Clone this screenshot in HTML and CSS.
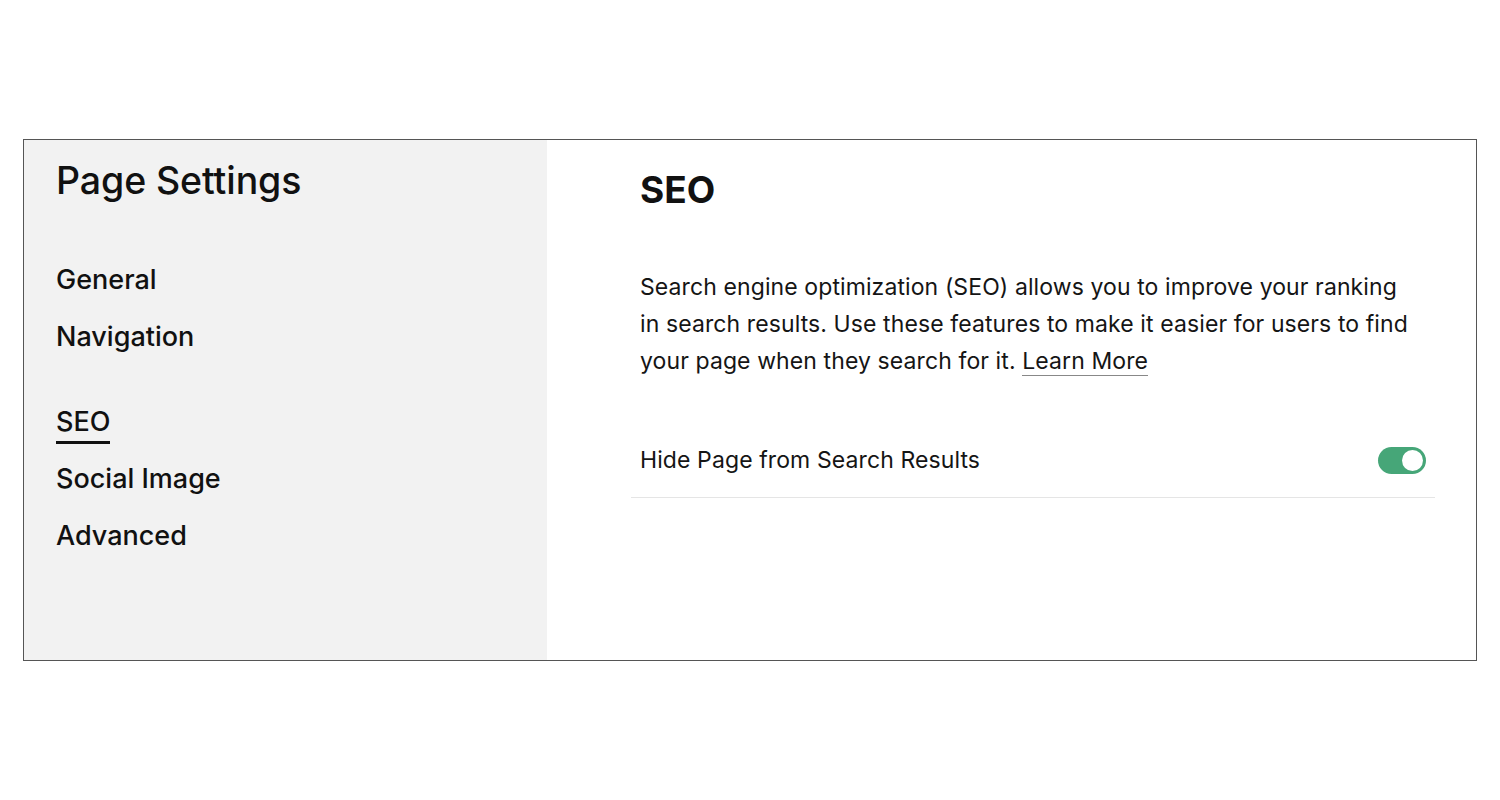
FILE: index.html
```html
<!DOCTYPE html>
<html lang="en">
<head>
<meta charset="utf-8">
<title>Page Settings</title>
<link rel="stylesheet" href="styles.css">
</head>
<body>
<div class="frame">
  <aside class="sidebar">
    <h1 class="side-title">Page Settings</h1>
    <nav class="nav">
      <div class="nav-group">
        <a class="nav-item">General</a>
        <a class="nav-item">Navigation</a>
      </div>
      <div class="nav-group">
        <a class="nav-item active">SEO</a>
        <a class="nav-item">Social Image</a>
        <a class="nav-item">Advanced</a>
      </div>
    </nav>
  </aside>
  <main class="main">
    <div class="panel">
      <h2 class="heading">SEO</h2>
      <p class="desc">Search engine optimization (SEO) allows you to improve your ranking in search results. Use these features to make it easier for users to find your page when they search for it. <a class="link">Learn More</a></p>
      <div class="row">
        <span class="row-label">Hide Page from Search Results</span>
        <span class="toggle"><span class="knob"></span></span>
      </div>
    </div>
  </main>
</div>
</body>
</html>
```
FILE: styles.css
```css
* { box-sizing: border-box; }
html, body { margin: 0; padding: 0; background: #fff; }
body {
  font-family: Inter, "Noto Sans", "Liberation Sans", sans-serif;
  color: #111;
  padding: 139px 23px 0 23px;
}
.frame {
  display: flex;
  width: 1454px;
  height: 522px;
  border: 1px solid #555;
}
.sidebar {
  width: 523px;
  flex: none;
  background: #f2f2f2;
  padding: 19px 32px 0 32px;
}
.side-title {
  margin: 0;
  font-size: 37.5px;
  font-weight: 500;
  line-height: 44px;
  letter-spacing: -0.1px;
}
.nav { margin-top: 57px; display: flex; flex-direction: column; gap: 45px; }
.nav-group { display: flex; flex-direction: column; gap: 17px; }
.nav-item {
  font-size: 27px;
  font-weight: 500;
  line-height: 40px;
  align-self: flex-start;
  position: relative;
}
.nav-item.active::after {
  content: "";
  position: absolute;
  left: 0; right: 0;
  bottom: -2px;
  height: 3px;
  background: #111;
}
.main { flex: 1; padding: 28px 41px 0 84px; }
.panel { display: flex; flex-direction: column; }
.heading {
  margin: 0 0 0 9px;
  font-size: 37px;
  font-weight: 700;
  line-height: 44px;
}
.desc {
  margin: 57px 0 0 9px;
  width: 775px;
  font-size: 23px;
  line-height: 37px;
  letter-spacing: 0.1px;
  font-weight: 400;
  color: #151515;
}
.link {
  border-bottom: 1px solid #888;
}
.row {
  margin-top: 62px;
  display: flex;
  align-items: center;
  justify-content: space-between;
  padding: 0 9px;
  height: 37px;
}
.row-label { font-size: 23px; line-height: 37px; letter-spacing: 0.1px; color: #151515; }
.toggle {
  width: 48px;
  height: 27px;
  border-radius: 14px;
  background: #46a678;
  position: relative;
}
.knob {
  position: absolute;
  right: 3px; top: 3px;
  width: 21px; height: 21px;
  border-radius: 50%;
  background: #fff;
}
.panel::after {
  content: "";
  display: block;
  height: 1px;
  background: #e5e5e5;
  margin-top: 18px;
}
```
